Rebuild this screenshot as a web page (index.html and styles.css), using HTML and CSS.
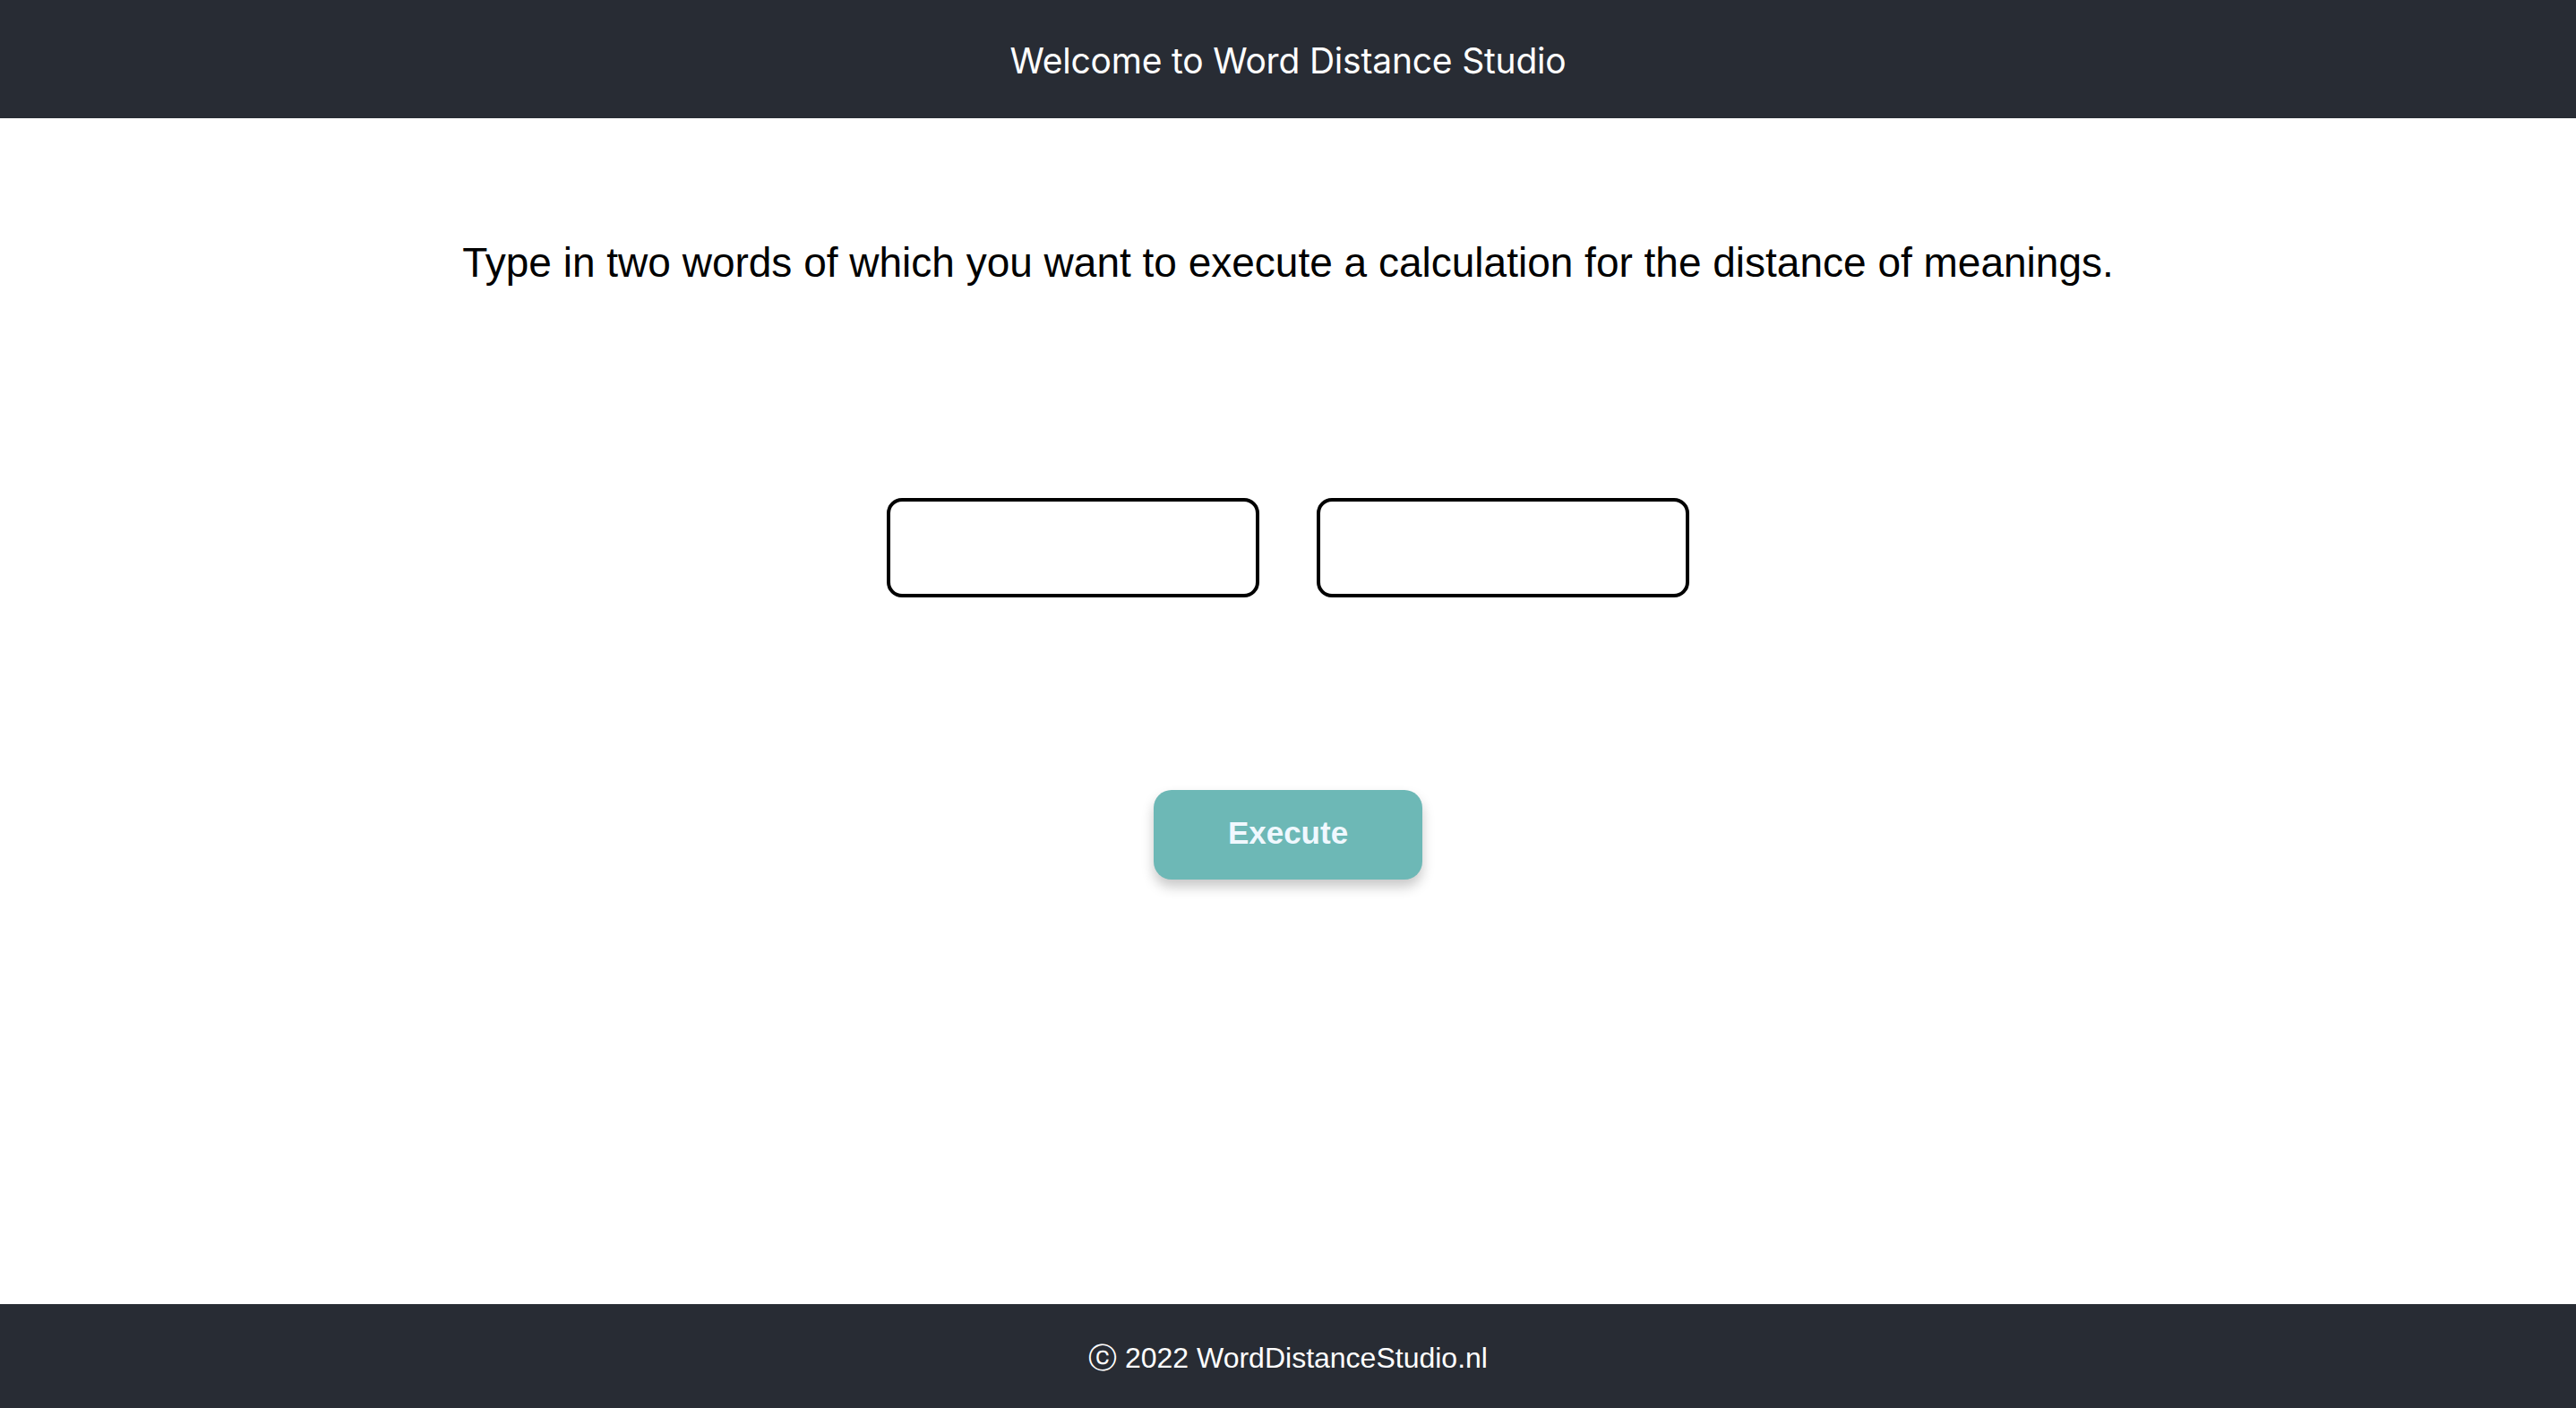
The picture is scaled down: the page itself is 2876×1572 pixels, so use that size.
FILE: index.html
```html
<!DOCTYPE html>
<html lang="en">
<head>
<meta charset="utf-8">
<title>Word Distance Studio</title>
<link rel="stylesheet" href="styles.css">
</head>
<body>
<header class="site-header">
  <h1 class="site-title">Welcome to Word Distance Studio</h1>
</header>
<main class="content">
  <p class="intro">Type in two words of which you want to execute a calculation for the distance of meanings.</p>
  <div class="inputs">
    <input class="word-input" type="text" aria-label="First word">
    <input class="word-input" type="text" aria-label="Second word">
  </div>
  <button class="execute-btn" type="button">Execute</button>
</main>
<footer class="site-footer">
  <span class="copy"><span class="copy-sign">ⓒ</span> 2022 WordDistanceStudio.nl</span>
</footer>
</body>
</html>
```

FILE: styles.css
```css
html, body {
  margin: 0;
  padding: 0;
}
body {
  min-height: 100vh;
  display: flex;
  flex-direction: column;
  background: #ffffff;
  font-family: "Liberation Sans", Arial, sans-serif;
  color: #000;
}
.site-header {
  height: 132px;
  box-sizing: border-box;
  padding-top: 3px;
  background: #282c34;
  display: flex;
  align-items: center;
  justify-content: center;
  flex-shrink: 0;
}
.site-title {
  margin: 0;
  font-family: Inter, "Liberation Sans", sans-serif;
  font-weight: 400;
  font-size: 39px;
  color: #ffffff;
  letter-spacing: -0.2px;
}
.content {
  flex: 1;
  display: flex;
  flex-direction: column;
  align-items: center;
}
.intro {
  margin: 133px 0 0;
  font-size: 46px;
  line-height: 56px;
  font-family: "Liberation Sans", Arial, sans-serif;
}
.inputs {
  margin-top: 235px;
  display: flex;
  gap: 64px;
}
.word-input {
  box-sizing: border-box;
  width: 416px;
  height: 111px;
  border: 4px solid #000;
  border-radius: 17px;
  background: #fff;
  font-size: 32px;
  padding: 0 16px;
  outline: none;
}
.execute-btn {
  margin-top: 215px;
  width: 300px;
  height: 100px;
  border: none;
  border-radius: 20px;
  background: #6db8b6;
  color: #f0f8ff;
  font-family: "Liberation Sans", Arial, sans-serif;
  font-weight: 700;
  font-size: 35px;
  padding: 0 0 4px;
  box-shadow: 0 8px 14px rgba(0, 0, 0, 0.22);
  cursor: pointer;
}
.site-footer {
  height: 116px;
  box-sizing: border-box;
  padding-top: 6px;
  background: #282c34;
  display: flex;
  align-items: center;
  justify-content: center;
  flex-shrink: 0;
}
.copy {
  color: #ffffff;
  font-size: 32px;
}
.copy-sign {
  font-family: "DejaVu Sans", sans-serif;
  font-weight: 200;
  font-size: 32px;
}
```
